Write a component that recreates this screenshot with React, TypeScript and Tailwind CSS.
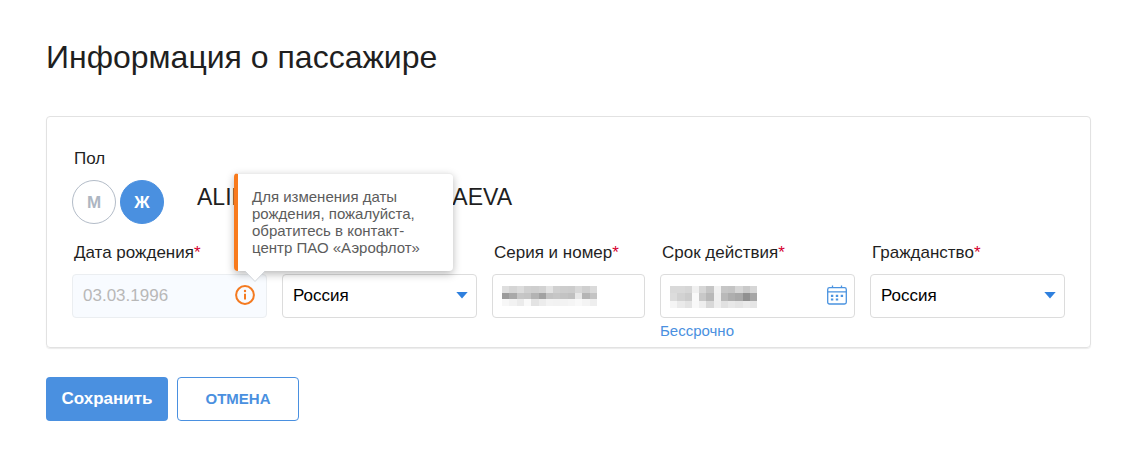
import type { ReactNode } from "react";

const numberMask = [
  ["#dedede", "#d5d5d5", "#dcdcdc", "#d0d0d0", "#cecece", "#d2d2d2", "#e3e3e3", "#d0d0d0", "#cdcdcd", "#cccccc", "#d8d8d8", "#cfcfcf", "#dadada"],
  ["#9b9b9b", "#a9a9a9", "#c6c6c6", "#c4c4c4", "#b3b3b3", "#a2a2a2", "#c3c3c3", "#c6c6c6", "#c3c3c3", "#c0c0c0", "#e8e8e8", "#b5b5b5", "#c4c4c4"],
  ["#f7f7f7", "#f2f2f2", "#ebebeb", "#f9f9f9", "#e3e3e3", "#ececec", "#f3f3f3", "#f2f2f2", "#f3f3f3", "#f5f5f5", "#f9f9f9", "#f4f4f4", "#eeeeee"],
];

const dateMask = [
  ["#d9d9d9", "#d9d9d9", "#d6d6d6", "#f0f0f0", "#d6d6d6", "#c5c5c5", "#f1f1f1", "#c6c6c6", "#c4c4c4", "#d6d6d6", "#c9c9c9", "#d6d6d6"],
  ["#dcdcdc", "#d2d2d2", "#cccccc", "#f9f9f9", "#c8c8c8", "#b8b8b8", "#efefef", "#b9b9b9", "#aeaeae", "#a8a8a8", "#909090", "#a6a6a6"],
  ["#f5f5f5", "#eaeaea", "#e3e3e3", "#f8f8f8", "#eeeeee", "#d8d8d8", "#eeeeee", "#e1e1e1", "#e8e8e8", "#e4e4e4", "#eaeaea", "#e5e5e5"],
];

function Mosaic({ rows, className }: { rows: string[][]; className: string }) {
  return (
    <svg
      aria-hidden="true"
      viewBox={`0 0 ${rows[0].length} 3`}
      preserveAspectRatio="none"
      shapeRendering="crispEdges"
      className={`pointer-events-none absolute top-3 ${className}`}
    >
      {rows.map((row, y) => row.map((c, x) => <rect key={`${x}-${y}`} x={x} y={y} width="1" height="1" fill={c} />))}
    </svg>
  );
}

function FieldLabel({ htmlFor, children }: { htmlFor: string; children: ReactNode }) {
  return (
    <label htmlFor={htmlFor} className="block h-8 pl-0.5 text-[17px] leading-[22px] whitespace-nowrap">
      {children}
      <span className="text-[#d6002f]">*</span>
    </label>
  );
}

function CountrySelect({ id, label }: { id: string; label?: string }) {
  return (
    <div className="relative">
      <select
        id={id}
        aria-label={label}
        defaultValue="ru"
        className="h-11 w-full appearance-none rounded border border-[#dcdcdc] bg-white pr-9 pl-2.5 text-[17px] text-black"
      >
        <option value="ru">Россия</option>
      </select>
      <svg aria-hidden="true" viewBox="0 0 12 7" className="pointer-events-none absolute top-[18px] right-[9px] h-[7px] w-3">
        <path d="M0.3 0h11.4L6 6.6z" fill="#2f80de" />
      </svg>
    </div>
  );
}

function GenderOption({ value, name, checked }: { value: string; name: string; checked?: boolean }) {
  return (
    <label className="cursor-pointer">
      <input type="radio" name="gender" aria-label={name} defaultChecked={checked} className="peer sr-only" />
      <span className="flex size-11 items-center justify-center rounded-full border border-[#b3bcc8] pt-0.5 text-[17px] font-bold text-[#adb6c2] peer-checked:border-[#4a90e0] peer-checked:bg-[#4a90e0] peer-checked:text-white">
        {value}
      </span>
    </label>
  );
}

function BirthDateHint() {
  return (
    <div
      role="tooltip"
      id="birth-hint"
      className="absolute bottom-full -left-px z-10 mb-3.5 w-[219px] rounded border-t border-l-4 border-t-[#ececec] border-l-[#f87a1c] bg-white pt-3.5 pr-8 pb-[15px] pl-3.5 text-[15px] leading-[17px] text-[#5c5c5c] shadow-[0_3px_8px_rgba(0,0,0,0.28)]"
    >
      Для изменения даты рождения, пожалуйста, обратитесь в контакт-центр ПАО «Аэрофлот»
      <svg aria-hidden="true" viewBox="0 0 22 12" className="absolute top-full left-1.5 h-3 w-[22px]">
        <path d="M1 0H21L11 11Z" fill="#fff" />
        <path d="M1 0L11 10.5L21 0" fill="none" stroke="#cfd3d8" strokeWidth="1" />
      </svg>
    </div>
  );
}

export default function App() {
  return (
    <main className="bg-white px-[46px] pt-[37px] pb-12 font-['Liberation_Sans',Arial,sans-serif] text-[#1f1f1f]">
      <h1 className="text-[32px] leading-10">Информация о пассажире</h1>

      <form onSubmit={(e) => e.preventDefault()} className="mt-[39px] mr-[3px]">
        <div className="rounded border border-[#e2e2e2] px-[25px] pt-8 pb-[7px] shadow-[0_1px_1px_rgba(0,0,0,0.08)]">
          <div className="flex items-end">
            <fieldset>
              <legend className="pl-0.5 text-[17px] leading-5">Пол</legend>
              <div className="mt-[11px] flex gap-1">
                <GenderOption value="М" name="Мужской" />
                <GenderOption value="Ж" name="Женский" checked />
              </div>
            </fieldset>
            <p className="ml-[33px] flex h-11 w-[315px] items-start justify-between pt-[3px] text-[23px] leading-7">
              <span>ALIN</span>
              <span>DAEVA</span>
            </p>
          </div>

          <div className="mt-[18px] grid grid-cols-[195fr_195fr_153fr_195fr_195fr] gap-x-[15px]">
            <div>
              <FieldLabel htmlFor="birth">Дата рождения</FieldLabel>
              <div className="relative">
                <input
                  id="birth"
                  disabled
                  defaultValue="03.03.1996"
                  aria-describedby="birth-hint"
                  className="h-11 w-full rounded border border-[#ebeef1] bg-[#f8fbff] pr-10 pl-2.5 text-[17px] text-[#b8b8b8]"
                />
                <div className="absolute top-[11px] right-3 size-5">
                  <svg aria-hidden="true" viewBox="0 0 20 20" className="size-5" fill="none" stroke="#f47a20">
                    <circle cx="10" cy="10" r="8.9" strokeWidth="2" />
                    <circle cx="10" cy="6" r="1.2" fill="#f47a20" stroke="none" />
                    <path d="M10 8.8v5.8" strokeWidth="2" />
                  </svg>
                  <BirthDateHint />
                </div>
              </div>
            </div>

            <div className="pt-8">
              <CountrySelect id="issuer" label="Страна выдачи" />
            </div>

            <div>
              <FieldLabel htmlFor="number">Серия и номер</FieldLabel>
              <div className="relative">
                <input id="number" className="h-11 w-full rounded border border-[#dcdcdc] bg-white px-2.5 text-[17px]" />
                <Mosaic rows={numberMask} className="left-2.5 h-5 w-[95px]" />
              </div>
            </div>

            <div>
              <FieldLabel htmlFor="expiry">Срок действия</FieldLabel>
              <div className="relative">
                <input id="expiry" className="h-11 w-full rounded border border-[#dcdcdc] bg-white pr-10 pl-2.5 text-[17px]" />
                <Mosaic rows={dateMask} className="left-2.5 h-[22px] w-[87px]" />
                <button type="button" aria-label="Открыть календарь" className="absolute top-[11px] right-2 size-5">
                  <svg aria-hidden="true" viewBox="0 0 20 20" className="size-5" fill="none" stroke="#4a93e0" strokeWidth="1.3">
                    <rect x="0.7" y="2.6" width="18.6" height="16.4" rx="1.8" />
                    <path d="M0.7 6.8h18.6M5.5 0.5v2.4M14.5 0.5v2.4" />
                    <path
                      d="M3.9 9.7h2.4v2.2H3.9zM8.8 9.7h2.4v2.2H8.8zM13.7 9.7h2.4v2.2h-2.4zM3.9 13.4h2.4v2.2H3.9zM8.8 13.4h2.4v2.2H8.8z"
                      fill="#4a93e0"
                      stroke="none"
                    />
                  </svg>
                </button>
              </div>
              <a href="#unlimited" className="mt-1 block text-[15px] leading-[18px] text-[#4a90e0]">
                Бессрочно
              </a>
            </div>

            <div>
              <FieldLabel htmlFor="citizenship">Гражданство</FieldLabel>
              <CountrySelect id="citizenship" />
            </div>
          </div>
        </div>

        <div className="mt-[29px] flex gap-[9px]">
          <button type="submit" className="h-11 w-[122px] rounded bg-[#4a90e0] text-[17px] font-bold text-white">
            Сохранить
          </button>
          <button type="button" className="h-11 w-[122px] rounded border border-[#4a90e0] bg-white text-[15px] font-bold text-[#4a90e0]">
            ОТМЕНА
          </button>
        </div>
      </form>
    </main>
  );
}
